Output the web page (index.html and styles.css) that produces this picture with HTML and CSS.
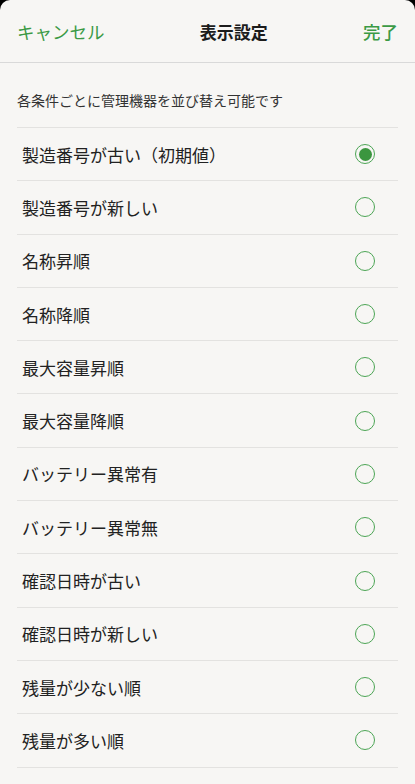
FILE: index.html
```html
<!DOCTYPE html>
<html lang="ja">
<head>
    <meta charset="UTF-8">
    <meta name="viewport" content="width=device-width, initial-scale=1.0">
    <title>表示設定</title>
    <link rel="stylesheet" href="styles.css">
</head>
<body>

<div class="sheet">
    <div class="header">
        <span class="header-btn">キャンセル</span>
        <span class="header-title">表示設定</span>
        <span class="header-btn done">完了</span>
    </div>

    <div class="content">
        <p class="note">各条件ごとに管理機器を並び替え可能です</p>

        <ul class="sort-list">
            <li class="sort-item"><span>製造番号が古い（初期値）</span><span class="radio checked"></span></li>
            <li class="sort-item"><span>製造番号が新しい</span><span class="radio"></span></li>
            <li class="sort-item"><span>名称昇順</span><span class="radio"></span></li>
            <li class="sort-item"><span>名称降順</span><span class="radio"></span></li>
            <li class="sort-item"><span>最大容量昇順</span><span class="radio"></span></li>
            <li class="sort-item"><span>最大容量降順</span><span class="radio"></span></li>
            <li class="sort-item"><span>バッテリー異常有</span><span class="radio"></span></li>
            <li class="sort-item"><span>バッテリー異常無</span><span class="radio"></span></li>
            <li class="sort-item"><span>確認日時が古い</span><span class="radio"></span></li>
            <li class="sort-item"><span>確認日時が新しい</span><span class="radio"></span></li>
            <li class="sort-item"><span>残量が少ない順</span><span class="radio"></span></li>
            <li class="sort-item"><span>残量が多い順</span><span class="radio"></span></li>
        </ul>
    </div>
</div>

</body>
</html>
```

FILE: styles.css
```css
body {
    margin: 0;
    background: #000;
    font-family: "Noto Sans CJK JP", "Noto Sans", sans-serif;
    color: #222;
}
.sheet {
    background: #f7f6f4;
    border-radius: 10px 10px 0 0;
    min-height: 100vh;
    overflow: hidden;
}
.header {
    height: 62px;
    display: flex;
    align-items: center;
    justify-content: space-between;
    padding: 0 17px;
    border-bottom: 1px solid #d9d9d9;
}
.header-btn {
    color: #3b9a45;
    font-size: 17.5px;
}
.header-title {
    font-size: 17px;
    font-weight: bold;
    color: #1c1c1c;
}
.done {
    font-weight: 500;
}
.content {
    padding: 0 17px;
}
.note {
    margin: 0;
    padding: 27px 0 17px;
    font-size: 14px;
    color: #333;
    border-bottom: 1px solid #e3e2e0;
}
.sort-list {
    list-style: none;
    margin: 0;
    padding: 0;
}
.sort-item {
    height: 53.3px;
    box-sizing: border-box;
    display: flex;
    align-items: center;
    justify-content: space-between;
    padding: 0 23px 0 5px;
    font-size: 17px;
    border-bottom: 1px solid #e3e2e0;
}
.radio {
    width: 20px;
    height: 20px;
    box-sizing: border-box;
    border: 1.5px solid #4ca555;
    border-radius: 50%;
    display: flex;
    align-items: center;
    justify-content: center;
}
.radio.checked::after {
    content: "";
    width: 13px;
    height: 13px;
    border-radius: 50%;
    background: #3b963f;
}
```
